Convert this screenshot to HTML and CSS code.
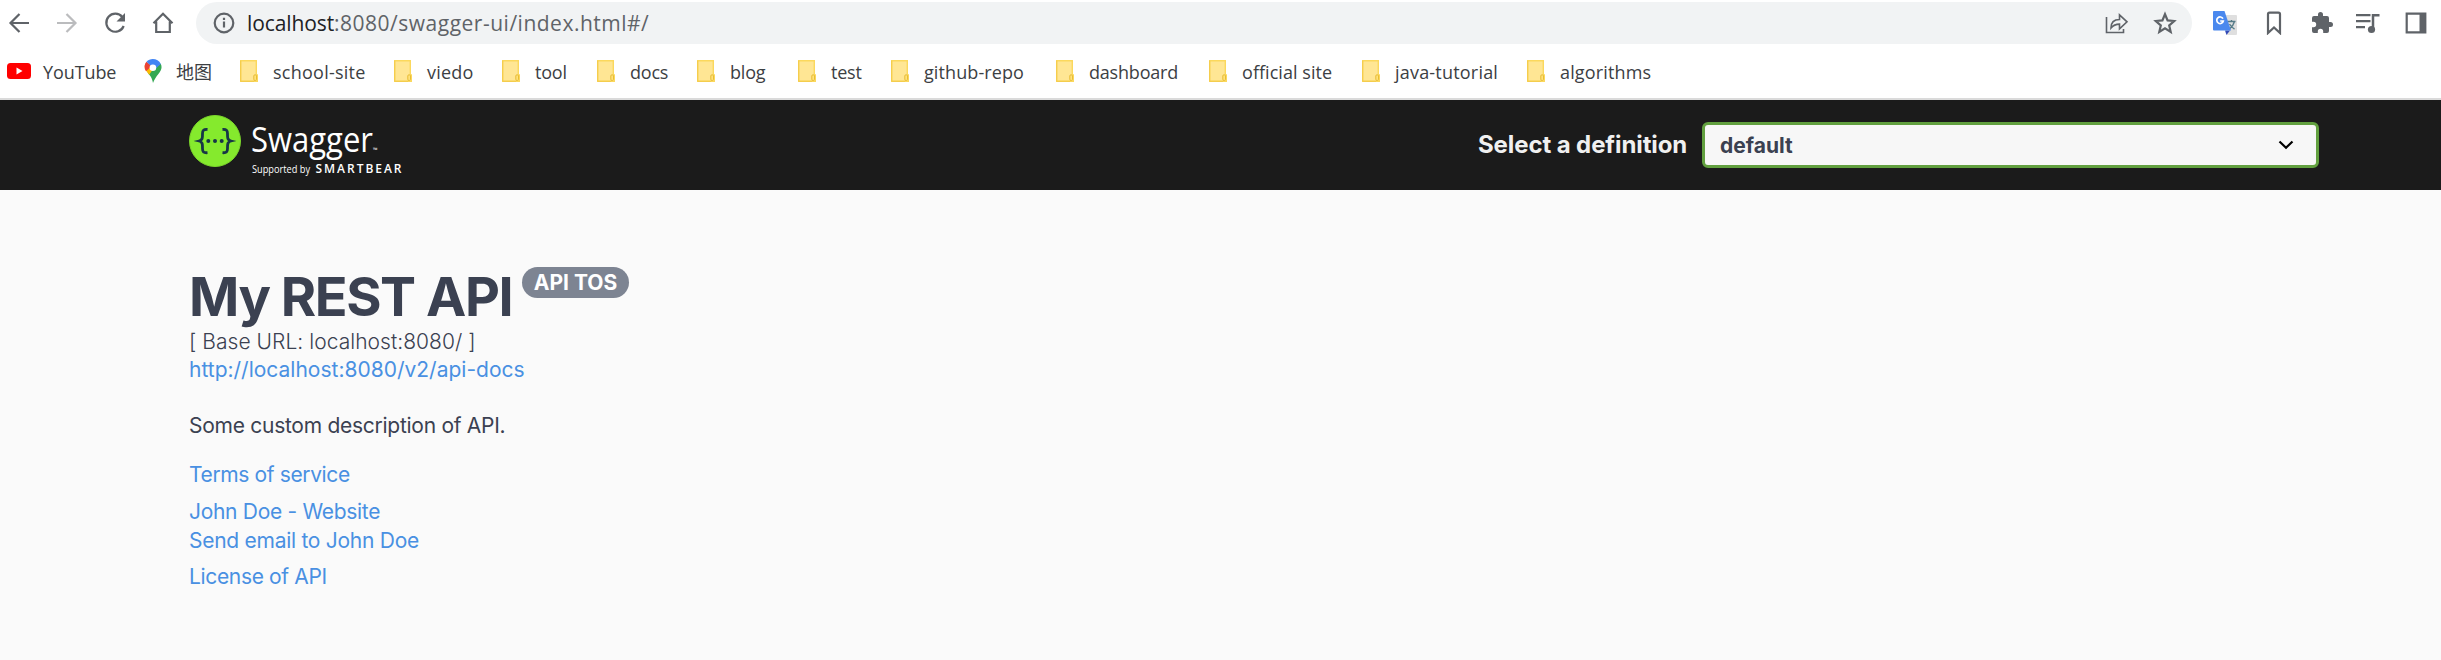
FILE: index.html
```html
<!DOCTYPE html>
<html lang="en">
<head>
<meta charset="utf-8">
<title>Swagger UI</title>
<link rel="stylesheet" href="styles.css">
</head>
<body>
<svg class="defs" width="0" height="0"><defs>
<symbol id="folder" viewBox="0 0 18 22"><path d="M.7.7h15.6v14.2h1V21.300H.7z" fill="#ffe694" stroke="#fbd85d" stroke-width="1.400"/><path d="M.7.7V21.300H14" fill="none" stroke="#f3cb4a"/><rect x="13.800" y="14.800" width="2.700" height="5.700" rx="1.200" fill="#ffe27c" stroke="#e8bd35"/></symbol>
</defs></svg>
<div class="toolbar">
  <svg class="ico" viewBox="0 0 24 24"><path d="M22 12H4M12.500 3 3.500 12l9 9" /></svg>
  <svg class="ico off" viewBox="0 0 24 24"><path d="M2 12h18M11.500 3l9 9-9 9" /></svg>
  <svg class="ico" viewBox="0 0 24 24"><path d="M19.300 6A9 9 0 1 0 20.700 15"/><path d="M22 2v8.500h-8.500z" fill="#5f6368" stroke="none"/></svg>
  <svg class="ico" viewBox="0 0 24 24"><path d="M2.500 12.200 12 2.700l9.500 9.500M5.200 10.500V21h13.600V10.500"/></svg>
  <div class="address">
    <svg class="info" viewBox="0 0 22 22"><circle cx="11" cy="11" r="9.300"/><path d="M11 9.500v6M11 5.700v2.200"/></svg>
    <span class="url"><b>localhost</b>:8080/swagger-ui/index.html#/</span>
    <svg class="share" viewBox="0 0 24 24"><path d="M1.500 6v15.500h17V18M6 17c0-6.500 4-8.500 8.500-8.500V3.800l7.500 7-7.500 7v-4.700C10 13.100 8 14.500 6 17z"/></svg>
    <svg class="star" viewBox="0 0 24 24"><path d="m12 3.200 2.600 6.200 6.600.6-5 4.400 1.500 6.500-5.700-3.500-5.700 3.500 1.500-6.500-5-4.400 6.600-.6z"/></svg>
  </div>
  <svg class="ext translate" viewBox="0 0 24 24"><path d="M9 4h14q1 0 1 1v18q0 1-1 1h-9z" fill="#dfdfdf"/><path d="M14.500 10.500h8M18.500 9v1.500M21.500 10.500q-1.500 5-5 7.500M16.500 13q2 3.500 5 5" stroke="#557b88" stroke-width="1.400" fill="none"/><path d="M12 19.500h5L13.500 24z" fill="#3249b5"/><path d="M1 0h10.500L18 19.500H1q-1 0-1-1V1q0-1 1-1z" fill="#4a88ee"/><path d="M10 7.700A3.300 3.300 0 1 0 10.300 10H7.200" stroke="#fff" stroke-width="1.700" fill="none"/></svg>
  <svg class="ext mark" viewBox="0 0 24 24"><path d="M6 22V3.200q0-1.500 1.500-1.500h9q1.500 0 1.500 1.500V22l-6-5.500z"/></svg>
  <svg class="ext puzzle" viewBox="0 0 24 24"><path d="M20.500 11H19V7a2 2 0 0 0-2-2h-4V3.500a2.500 2.500 0 0 0-5 0V5H4a2 2 0 0 0-2 2v3.800h1.500a2.700 2.700 0 0 1 0 5.400H2V20a2 2 0 0 0 2 2h3.800v-1.500a2.700 2.700 0 0 1 5.400 0V22H17a2 2 0 0 0 2-2v-4h1.500a2.500 2.500 0 0 0 0-5z"/></svg>
  <svg class="ext music" viewBox="0 0 24 24"><path d="M0 4.200h14.500M0 10.200h14.500M0 16.200h9" /><path d="M17 19V4.200h6.500" stroke-width="2.500"/><circle cx="15.500" cy="18.500" r="3.600" fill="#5f6368" stroke="none"/></svg>
  <svg class="ext panel" viewBox="0 0 24 24"><path d="M2.700 2.700h18.600v18.600H2.700z"/><path d="M15.500 2.500h6v19h-6z" fill="#5f6368" stroke="none"/></svg>
</div>
<div class="bookmarks">
  <div class="bm yt"><svg viewBox="0 0 24 16"><rect width="24" height="16" rx="3.500" fill="#f00"/><path d="M9.500 4.500v7l6-3.500z" fill="#fff"/></svg><span>YouTube</span></div>
  <div class="bm map"><svg viewBox="0 0 18 24"><path d="M9 24C8 18.500 6 16.800 3.500 13.600L13 3l3.800 2C20 12 12 15 9 24z" fill="#34a853"/><path d="M3.500 13.600Q0 9.500.8 6.200L6 6l7-1.500L5.200 15.800z" fill="#fbbc04"/><path d="M.6 7Q.8 4.300 2.500 2.700L8 7 2 12.200Q.3 9.500.6 7z" fill="#ea4335"/><path d="M2.500 2.700C6.500-1.700 14.500-.4 16.800 5L10 11 7 7z" fill="#4285f4"/><circle cx="8.900" cy="8.700" r="3.300" fill="#fff"/></svg><span>地图</span></div>
  <div class="bm school"><svg><use href="#folder"/></svg><span>school-site</span></div>
  <div class="bm viedo"><svg><use href="#folder"/></svg><span>viedo</span></div>
  <div class="bm tool"><svg><use href="#folder"/></svg><span>tool</span></div>
  <div class="bm docs"><svg><use href="#folder"/></svg><span>docs</span></div>
  <div class="bm blog"><svg><use href="#folder"/></svg><span>blog</span></div>
  <div class="bm test"><svg><use href="#folder"/></svg><span>test</span></div>
  <div class="bm github"><svg><use href="#folder"/></svg><span>github-repo</span></div>
  <div class="bm dash"><svg><use href="#folder"/></svg><span>dashboard</span></div>
  <div class="bm official"><svg><use href="#folder"/></svg><span>official site</span></div>
  <div class="bm java"><svg><use href="#folder"/></svg><span>java-tutorial</span></div>
  <div class="bm algo"><svg><use href="#folder"/></svg><span>algorithms</span></div>
</div>
<header class="topbar">
  <svg class="logo" viewBox="0 0 220 66">
    <circle cx="26" cy="27" r="25.500" fill="#85ea2d" stroke="#7bd62b"/>
    <g fill="none" stroke="#173647" stroke-width="2.800"><path d="M18.500 15.500c-4-.4-5 1-5 4 0 4 .3 6.500-3.500 7.500 3.800 1 3.500 3.500 3.500 7.500 0 3.500 1 4.500 5 4.200M33.500 15.500c4-.4 5 1 5 4 0 4-.3 6.500 3.500 7.500-3.800 1-3.500 3.500-3.500 7.500 0 3.500-1 4.500-5 4.200"/></g>
    <g fill="#173647"><circle cx="19.300" cy="27" r="2"/><circle cx="26" cy="27" r="2"/><circle cx="32.700" cy="27" r="2"/></g>
    <text class="word" x="62" y="37.500" textLength="122" lengthAdjust="spacingAndGlyphs">Swagger</text>
    <text class="tm" x="184" y="37.500">™</text>
    <text class="sup" x="63" y="58.500" textLength="58" lengthAdjust="spacingAndGlyphs">Supported by</text>
    <text class="bear" x="126.500" y="58.500" textLength="86" lengthAdjust="spacing">SMARTBEAR</text>
  </svg>
  <span class="label">Select a definition</span>
  <div class="select"><span>default</span><svg viewBox="0 0 16 10"><path d="m1.500 1.500 6.500 6.300 6.500-6.300"/></svg></div>
</header>
<main>
  <div class="title"><h1>My REST API</h1><span class="badge">API TOS</span></div>
  <div class="base">[ Base URL: localhost:8080/ ]</div>
  <a class="docs-link">http://localhost:8080/v2/api-docs</a>
  <p class="desc">Some custom description of API.</p>
  <a class="terms">Terms of service</a>
  <a class="site">John Doe - Website</a>
  <a class="mail">Send email to John Doe</a>
  <a class="license">License of API</a>
</main>
</body>
</html>
```
FILE: styles.css
```css
* { box-sizing: border-box; }
body { margin: 0; width: 2441px; height: 660px; background: #fafafa; font-family: Inter, sans-serif; overflow: hidden; }
.defs { display: block; position: absolute; }
svg { flex: none; display: block; }

.toolbar { height: 46px; background: #fff; display: flex; align-items: center; padding: 0 12px 0 7px; }
.toolbar svg { fill: none; stroke: #5f6368; stroke-width: 2.200; }
.ico { width: 24px; height: 24px; margin-right: 24px; }
.toolbar .off { stroke: #bbbcbe; }
.address { width: 1996px; height: 42px; margin-left: -3px; margin-right: 21px; border-radius: 21px; background: #f1f3f4; display: flex; align-items: center; padding: 0 15px 0 17px; }
.info { width: 22px; height: 22px; margin-right: 12px; }
.url { flex: 1; font: 21px/42px "Open Sans", sans-serif; letter-spacing: 0.500px; color: #5f6368; white-space: nowrap; }
.url b { font-weight: 400; color: #202124; letter-spacing: -0.100px; }
.share { width: 24px; height: 24px; margin-right: 24px; }
.toolbar .share { stroke-width: 1.600; }
.star { width: 24px; height: 24px; }
.ext { width: 24px; height: 24px; margin-right: 24px; }
.toolbar .translate { stroke: none; stroke-width: 0; margin-right: 25px; }
.mark { margin-right: 24px; }
.toolbar .puzzle { fill: #5f6368; stroke: none; margin-right: 22px; }
.music { margin-right: 24px; }
.panel { margin-right: 0; }

.bookmarks { height: 54px; background: #fff; border-bottom: 2px solid #dadada; display: flex; padding-left: 7px; font: 18px/50px "Open Sans", "Noto Sans CJK SC", sans-serif; color: #3c4043; }
.bm { display: flex; align-items: center; height: 50px; white-space: nowrap; letter-spacing: -0.200px; }
.bm svg { width: 18px; height: 22px; margin-right: 15px; }
.bm span { padding-top: 2px; }
.bm.yt { width: 137px; letter-spacing: -0.100px; }
.yt svg { width: 24px; height: 16px; margin-right: 12px; }
.bm.map { width: 96px; letter-spacing: 0; }
.bm.map svg { height: 24px; margin-right: 14px; }
.bm.school { width: 154px; letter-spacing: 0.250px; }
.bm.viedo { width: 108px; letter-spacing: 0.200px; }
.tool { width: 95px; }
.bm.docs { width: 100px; }
.blog { width: 101px; }
.test { width: 93px; }
.bm.github { width: 165px; letter-spacing: 0.100px; }
.dash { width: 153px; }
.bm.official { width: 153px; letter-spacing: 0.050px; }
.bm.java { width: 165px; letter-spacing: 0.200px; }
.bm.algo { letter-spacing: 0.150px; }

.topbar { height: 90px; background: #1b1b1b; display: flex; align-items: center; padding: 0 122px 0 189px; }
.logo { width: 220px; height: 66px; margin-top: 4px; }
.logo text { fill: #fff; font-family: "Open Sans", sans-serif; }
.logo .word { font-size: 34px; }
.logo .tm { font-size: 6px; }
.logo .sup { font-size: 10px; }
.logo .bear { font-size: 12px; font-weight: 600; }
.label { margin-left: auto; width: 224px; font-size: 24px; line-height: 30px; font-weight: 700; letter-spacing: -0.100px; color: #f0f0f0; white-space: nowrap; }
.select { width: 617px; height: 46px; border: 3px solid #62a03f; border-radius: 6px; background: #f7f7f7; display: flex; align-items: center; justify-content: space-between; padding: 0 22px 0 15px; font-size: 21px; font-weight: 700; color: #3b4151; }
.select svg { width: 16px; height: 10px; fill: none; stroke: #000; stroke-width: 2.200; }

main { padding: 74px 189px 0; display: flex; flex-direction: column; align-items: flex-start; font-size: 21px; line-height: 28px; color: #3b4151; white-space: nowrap; }
.title { display: flex; align-items: flex-start; height: 64px; }
h1 { margin: 0; width: 333px; font-size: 54px; line-height: 65px; font-weight: 700; letter-spacing: -1.450px; }
.badge { width: 107px; height: 31px; margin-top: 3px; border-radius: 16px; background: #7d8492; color: #fff; font-weight: 700; line-height: 31px; text-align: center; }
.base { font-weight: 300; letter-spacing: 0.040px; }
a { color: #4990e2; }
.desc { margin: 28px 0 21px; letter-spacing: -0.270px; }
.terms { margin-bottom: 9px; letter-spacing: -0.370px; }
.site { letter-spacing: -0.300px; }
.mail { margin: 1px 0 8px; letter-spacing: -0.270px; }
.license { letter-spacing: -0.340px; }
```
